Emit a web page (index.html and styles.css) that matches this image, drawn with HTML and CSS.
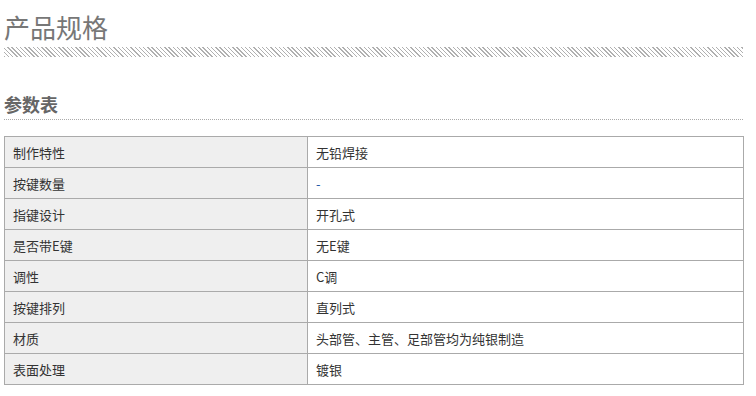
FILE: index.html
```html
<!DOCTYPE html>
<html>
<head>
<meta charset="utf-8">
<link rel="stylesheet" href="styles.css">
</head>
<body>
<div class="page">
  <h1 class="title">产品规格</h1>
  <div class="hatch"></div>
  <h2 class="subtitle">参数表</h2>
  <table class="spec">
    <tr><td class="k">制作特性</td><td class="v">无铅焊接</td></tr>
    <tr><td class="k">按键数量</td><td class="v"><a class="dash">-</a></td></tr>
    <tr><td class="k">指键设计</td><td class="v">开孔式</td></tr>
    <tr><td class="k">是否带E键</td><td class="v">无E键</td></tr>
    <tr><td class="k">调性</td><td class="v">C调</td></tr>
    <tr><td class="k">按键排列</td><td class="v">直列式</td></tr>
    <tr><td class="k">材质</td><td class="v">头部管、主管、足部管均为纯银制造</td></tr>
    <tr><td class="k">表面处理</td><td class="v">镀银</td></tr>
  </table>
</div>
</body>
</html>
```
FILE: styles.css
```css
html, body { margin: 0; padding: 0; background: #fff; }
body { font-family: "Noto Sans CJK SC", "Liberation Sans", sans-serif; color: #333; }
.page { width: 739px; margin-left: 4px; padding-top: 10px; }
.title {
  margin: 0;
  font-size: 26px;
  line-height: 34px;
  font-weight: normal;
  color: #777;
  font-family: "Noto Sans CJK SC", serif;
}
.hatch {
  margin-top: 3px;
  height: 10px;
  background: repeating-linear-gradient(45deg, #b0b0b0 0 1px, #fff 1px 3px);
}
.subtitle {
  margin: 33px 0 0 0;
  font-size: 18px;
  line-height: 28px;
  font-weight: bold;
  color: #666;
  padding-bottom: 1px;
  border-bottom: 1px dotted #aaa;
}
.spec {
  margin-top: 16px;
  width: 740px;
  border-collapse: collapse;
  font-size: 13px;
}
.spec td {
  border: 1px solid #aaa;
  height: 31px;
  padding: 0 8px;
  box-sizing: border-box;
  vertical-align: middle;
}
.spec .k { width: 303px; background: #efefef; }
.spec .v { background: #fff; }
.dash { color: #1e5aa8; }
```
